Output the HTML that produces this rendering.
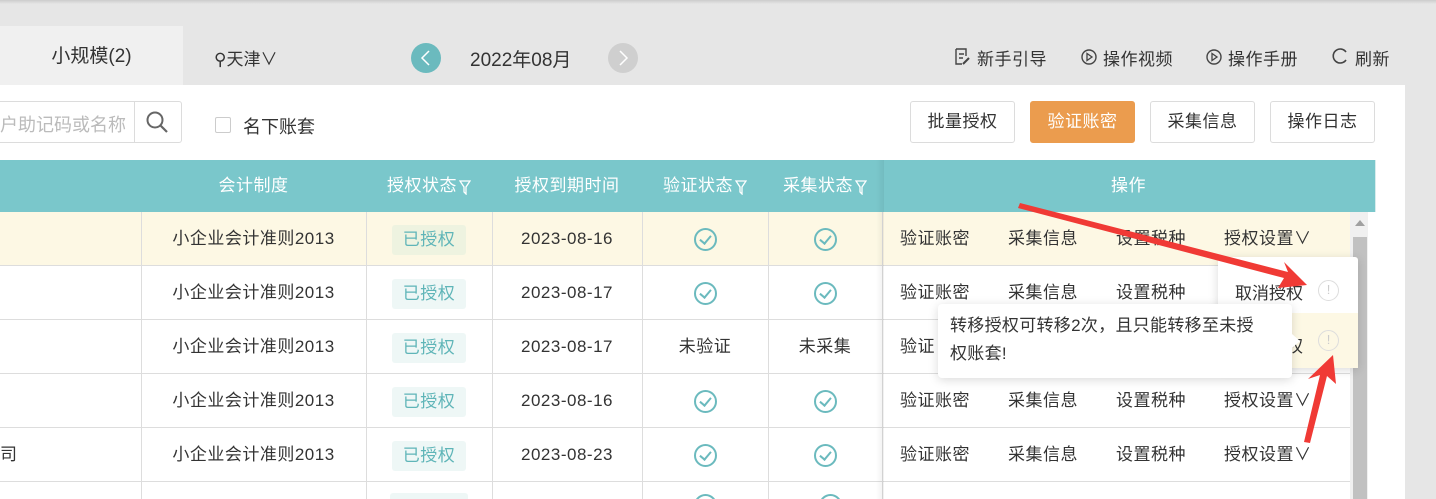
<!DOCTYPE html>
<html><head><meta charset="utf-8"><style>
*{box-sizing:border-box;margin:0;padding:0}
html{width:1436px;height:499px;overflow:hidden}
body{width:1436px;height:499px;overflow:hidden;background:#e6e6e6;font-family:"Liberation Sans","Noto Sans CJK SC",sans-serif;color:#333;position:relative;font-size:17px}
.a{position:absolute}
.white{left:0;top:85px;width:1405px;height:414px;background:#fff}
.btn{position:absolute;top:101px;height:42px;border:1px solid #dcdcdc;border-radius:3px;background:#fff;font-size:17px;line-height:40px;text-align:center;letter-spacing:.5px}
.hd{position:absolute;top:160px;height:52px;background:#7ac7cb;color:#fff;font-size:17px;line-height:52px;text-align:center;border-right:1px solid #d8ecec;letter-spacing:.5px}
.row{position:absolute;left:0;width:1350px;height:54px;border-bottom:1px solid #ddd}
.c{position:absolute;top:0;height:53px;line-height:53px;text-align:center;border-right:1px solid #ddd;font-size:17px;color:#333;letter-spacing:.5px}
.tag{display:inline-block;background:#eef7f6;color:#5fb5b8;font-size:17px;line-height:30px;padding:0 11px;border-radius:3px;vertical-align:middle;letter-spacing:.5px}
.ck{display:inline-block;width:23px;height:23px;border:2px solid #6bbabe;border-radius:50%;vertical-align:middle;position:relative}
.ck:after{content:"";position:absolute;left:6.5px;top:3px;width:5px;height:9px;border-right:2px solid #6bbabe;border-bottom:2px solid #6bbabe;transform:rotate(40deg)}
.op{position:absolute;top:0;line-height:53px;font-size:17px;color:#333;letter-spacing:.5px}
.f{display:inline-block;vertical-align:middle;margin-left:2px}
.top{position:absolute;top:45px;font-size:17px;letter-spacing:.5px}
</style></head><body>
<div class="a" style="left:0;top:0;width:1436px;height:4px;background:linear-gradient(#ccc,#e6e6e6)"></div>
<div class="a" style="left:0;top:26px;width:183px;height:59px;background:#f0f0f0;text-align:center;line-height:62px;font-size:19px">小规模(2)</div>
<div class="a" style="left:214px;top:45px;font-size:17px">&#9906;天津∨</div>
<div class="a" style="left:411px;top:43px;width:30px;height:30px;border-radius:50%;background:#6bbabe"></div>
<svg class="a" style="left:411px;top:43px" width="30" height="30"><path d="M18 8L11 15L18 22" fill="none" stroke="#fff" stroke-width="1.5"/></svg>
<div class="a" style="left:470px;top:45px;font-size:19px">2022年08月</div>
<div class="a" style="left:608px;top:43px;width:30px;height:30px;border-radius:50%;background:#cfcfcf"></div>
<svg class="a" style="left:608px;top:43px" width="30" height="30"><path d="M12 8L19 15L12 22" fill="none" stroke="#fff" stroke-width="1.5"/></svg>
<svg class="a" style="left:953px;top:47px" width="18" height="20"><path d="M3 2h10v7M3 2v15h6M6 7h5M6 11h4" fill="none" stroke="#444" stroke-width="1.4"/><path d="M10 17l6-6" stroke="#444" stroke-width="2"/></svg>
<div class="top" style="left:977px">新手引导</div>
<svg class="a" style="left:1080px;top:48px" width="18" height="18"><circle cx="9" cy="9" r="7" fill="none" stroke="#444" stroke-width="1.4"/><path d="M7 5.5v7l5-3.5z" fill="none" stroke="#444" stroke-width="1.3"/></svg>
<div class="top" style="left:1103px">操作视频</div>
<svg class="a" style="left:1205px;top:48px" width="18" height="18"><circle cx="9" cy="9" r="7" fill="none" stroke="#444" stroke-width="1.4"/><path d="M7 5.5v7l5-3.5z" fill="none" stroke="#444" stroke-width="1.3"/></svg>
<div class="top" style="left:1228px">操作手册</div>
<svg class="a" style="left:1331px;top:47px" width="18" height="18"><path d="M15 5A7 7 0 1 0 15 13" fill="none" stroke="#444" stroke-width="1.6"/></svg>
<div class="top" style="left:1355px">刷新</div>
<div class="a white"></div>
<div class="a" style="left:-4px;top:101px;width:186px;height:42px;border:1px solid #dcdcdc;border-radius:3px;background:#fff"></div>
<div class="a" style="left:0;top:111px;color:#bbb;font-size:18px">户助记码或名称</div>
<div class="a" style="left:134px;top:101px;width:1px;height:42px;background:#dcdcdc"></div>
<svg class="a" style="left:145px;top:110px" width="26" height="26"><circle cx="10" cy="10" r="7.5" fill="none" stroke="#666" stroke-width="2"/><path d="M15.5 15.5L22 22" stroke="#666" stroke-width="2.2"/></svg>
<div class="a" style="left:215px;top:117px;width:16px;height:16px;border:1px solid #ccc;border-radius:2px"></div>
<div class="a" style="left:243px;top:113px;font-size:18px">名下账套</div>
<div class="btn" style="left:910px;width:105px">批量授权</div>
<div class="btn" style="left:1030px;width:105px;background:#eb9c4e;border-color:#eb9c4e;color:#fff">验证账密</div>
<div class="btn" style="left:1150px;width:105px">采集信息</div>
<div class="btn" style="left:1270px;width:105px">操作日志</div>
<div class="hd" style="left:0;width:142px"></div>
<div class="hd" style="left:141px;width:226px">会计制度</div>
<div class="hd" style="left:366px;width:127px">授权状态<svg class="f" width="12" height="16"><path d="M1 2h10L7 8v7L5 13V8z" fill="none" stroke="#fff" stroke-width="1.3"/></svg></div>
<div class="hd" style="left:492px;width:151px">授权到期时间</div>
<div class="hd" style="left:642px;width:127px">验证状态<svg class="f" width="12" height="16"><path d="M1 2h10L7 8v7L5 13V8z" fill="none" stroke="#fff" stroke-width="1.3"/></svg></div>
<div class="hd" style="left:768px;width:115px">采集状态<svg class="f" width="12" height="16"><path d="M1 2h10L7 8v7L5 13V8z" fill="none" stroke="#fff" stroke-width="1.3"/></svg></div>
<div class="hd" style="left:882px;width:494px">操作</div>

<div class="row" style="top:212px;background:#fdf8e4"><div class="c" style="left:0;width:142px"></div><div class="c" style="left:141px;width:226px">小企业会计准则2013</div><div class="c" style="left:366px;width:127px"><span class="tag" style="background:#eef3e0">已授权</span></div><div class="c" style="left:492px;width:151px">2023-08-16</div><div class="c" style="left:642px;width:127px"><span class="ck"></span></div><div class="c" style="left:768px;width:115px"><span class="ck"></span></div><span class="op" style="left:900px">验证账密</span><span class="op" style="left:1008px">采集信息</span><span class="op" style="left:1116px">设置税种</span><span class="op" style="left:1224px">授权设置∨</span></div>
<div class="row" style="top:266px"><div class="c" style="left:0;width:142px"></div><div class="c" style="left:141px;width:226px">小企业会计准则2013</div><div class="c" style="left:366px;width:127px"><span class="tag">已授权</span></div><div class="c" style="left:492px;width:151px">2023-08-17</div><div class="c" style="left:642px;width:127px"><span class="ck"></span></div><div class="c" style="left:768px;width:115px"><span class="ck"></span></div><span class="op" style="left:900px">验证账密</span><span class="op" style="left:1008px">采集信息</span><span class="op" style="left:1116px">设置税种</span></div>
<div class="row" style="top:320px"><div class="c" style="left:0;width:142px"></div><div class="c" style="left:141px;width:226px">小企业会计准则2013</div><div class="c" style="left:366px;width:127px"><span class="tag">已授权</span></div><div class="c" style="left:492px;width:151px">2023-08-17</div><div class="c" style="left:642px;width:127px">未验证</div><div class="c" style="left:768px;width:115px">未采集</div><span class="op" style="left:900px">验证</span></div>
<div class="row" style="top:374px"><div class="c" style="left:0;width:142px"></div><div class="c" style="left:141px;width:226px">小企业会计准则2013</div><div class="c" style="left:366px;width:127px"><span class="tag">已授权</span></div><div class="c" style="left:492px;width:151px">2023-08-16</div><div class="c" style="left:642px;width:127px"><span class="ck"></span></div><div class="c" style="left:768px;width:115px"><span class="ck"></span></div><span class="op" style="left:900px">验证账密</span><span class="op" style="left:1008px">采集信息</span><span class="op" style="left:1116px">设置税种</span><span class="op" style="left:1224px">授权设置∨</span></div>
<div class="row" style="top:428px"><div class="c" style="left:0;width:142px;text-align:left">司</div><div class="c" style="left:141px;width:226px">小企业会计准则2013</div><div class="c" style="left:366px;width:127px"><span class="tag">已授权</span></div><div class="c" style="left:492px;width:151px">2023-08-23</div><div class="c" style="left:642px;width:127px"><span class="ck"></span></div><div class="c" style="left:768px;width:115px"><span class="ck"></span></div><span class="op" style="left:900px">验证账密</span><span class="op" style="left:1008px">采集信息</span><span class="op" style="left:1116px">设置税种</span><span class="op" style="left:1224px">授权设置∨</span></div>
<div class="row" style="top:482px;height:17px;border:none;overflow:hidden"><div class="c" style="left:0;width:142px;height:17px"></div><div class="c" style="left:141px;width:226px;height:17px"></div><div class="c" style="left:366px;width:127px;height:17px"><div style="position:absolute;left:24px;top:11px;width:78px;height:30px;background:#eef7f6;border-radius:3px"></div></div><div class="c" style="left:492px;width:151px;height:17px"></div><div class="c" style="left:642px;width:127px;height:17px"><span class="ck" style="position:absolute;left:52px;top:12px"></span></div><div class="c" style="left:768px;width:115px;height:17px"><span class="ck" style="position:absolute;left:51px;top:12px"></span></div></div>
<div class="a" style="left:876px;top:160px;width:8px;height:339px;background:linear-gradient(90deg,rgba(0,0,0,0),rgba(0,0,0,.06))"></div>
<div class="a" style="left:1350px;top:212px;width:18px;height:287px;background:#f0f0f0"></div>
<div class="a" style="left:1353px;top:237px;width:14px;height:262px;background:#c1c1c1"></div>
<div class="a" style="left:1355px;top:220px;width:0;height:0;border-left:5px solid transparent;border-right:5px solid transparent;border-bottom:6px solid #a0a0a0"></div>

<div class="a" style="left:1218px;top:257px;width:140px;height:111px;background:#fff;box-shadow:0 2px 10px rgba(0,0,0,.15);border-radius:3px"></div>
<div class="a" style="left:1218px;top:313px;width:140px;height:55px;background:#fdf8e4"></div>
<div class="a" style="left:1235px;top:279px;font-size:17px">取消授权</div>
<div class="a" style="left:1235px;top:332px;font-size:17px">转移授权</div>
<div class="a" style="left:1318px;top:280px;width:21px;height:21px;border:1.5px solid #ddd;border-radius:50%;color:#ccc;font-size:13px;text-align:center;line-height:18px">!</div>
<div class="a" style="left:1318px;top:330px;width:21px;height:21px;border:1.5px solid #ddd;border-radius:50%;color:#ccc;font-size:13px;text-align:center;line-height:18px">!</div>

<div class="a" style="left:938px;top:304px;width:354px;height:74px;background:#fff;border-radius:4px;box-shadow:0 2px 10px rgba(0,0,0,.15);padding:8px 12px;font-size:17px;line-height:28px;color:#333;letter-spacing:.3px">转移授权可转移2次，且只能转移至未授<br>权账套!</div>
<div class="a" style="left:1292px;top:334px;width:0;height:0;border-top:7px solid transparent;border-bottom:7px solid transparent;border-left:8px solid #fff"></div>

<svg class="a" style="left:0;top:0" width="1436" height="499">
<polygon points="1020,203 1288,272 1284,262 1307,285 1278,288 1284,278 1018,208" fill="#f03a35"/>
<polygon points="1304,442 1320,375 1308,379 1333,355 1336,384 1327,376 1310,443" fill="#f03a35"/>
</svg>
</body></html>
